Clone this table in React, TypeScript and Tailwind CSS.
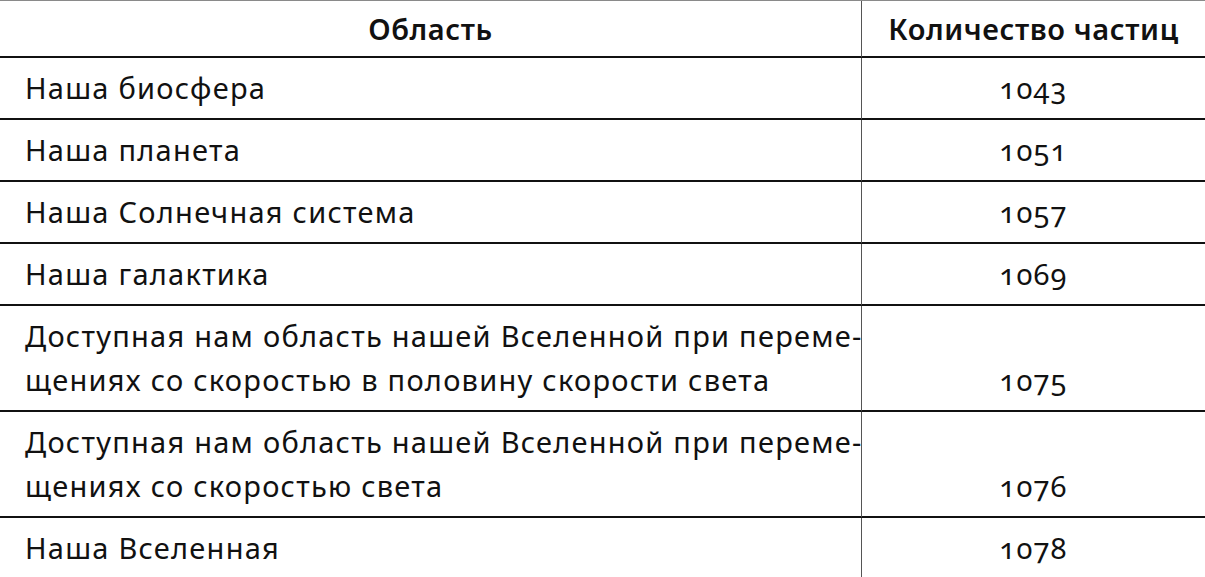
import React from "react";

const rows: { label: React.ReactNode; value: string; two?: boolean }[] = [
  { label: "Наша биосфера", value: "1043" },
  { label: "Наша планета", value: "1051" },
  { label: "Наша Солнечная система", value: "1057" },
  { label: "Наша галактика", value: "1069" },
  {
    label: (
      <>
        Доступная нам область нашей Вселенной при переме-
        <br />
        щениях со скоростью в половину скорости света
      </>
    ),
    value: "1075",
    two: true,
  },
  {
    label: (
      <>
        Доступная нам область нашей Вселенной при переме-
        <br />
        щениях со скоростью света
      </>
    ),
    value: "1076",
    two: true,
  },
  { label: "Наша Вселенная", value: "1078" },
];

export default function App() {
  return (
    <div
      className="w-[1205px] h-[577px] bg-white text-[#111] overflow-hidden"
      style={{ fontFamily: '"Noto Sans", "DejaVu Sans", sans-serif' }}
    >
      <div className="grid grid-cols-[862px_1fr] border-t border-[#8a8a8a]">
        <div className="h-[57px] flex items-center justify-center border-b-2 border-r-[1.5px] border-b-[#111] border-r-[#555] text-[29px] tracking-[0.6px] font-semibold">
          Область
        </div>
        <div className="h-[57px] flex items-center justify-center border-b-2 border-b-[#111] text-[29px] tracking-[0.6px] font-semibold">
          Количество частиц
        </div>
        {rows.map((r, i) => {
          const last = i === rows.length - 1;
          return (
            <React.Fragment key={i}>
              <div
                className={
                  "pl-[25px] py-[8px] text-[29px] tracking-[1.25px] leading-[44px] whitespace-nowrap border-r-[1.5px] border-r-[#555] " +
                  (last ? "border-b border-b-[#bbb]" : "border-b-2 border-b-[#111]")
                }
              >
                {r.label}
              </div>
              <div
                className={
                  "flex justify-center py-[8px] text-[29px] tracking-[1.25px] leading-[44px] oldstyle-nums " +
                  (r.two ? "items-end " : "items-center ") +
                  (last ? "border-b border-b-[#bbb]" : "border-b-2 border-b-[#111]")
                }
              >
                {r.value}
              </div>
            </React.Fragment>
          );
        })}
      </div>
    </div>
  );
}
